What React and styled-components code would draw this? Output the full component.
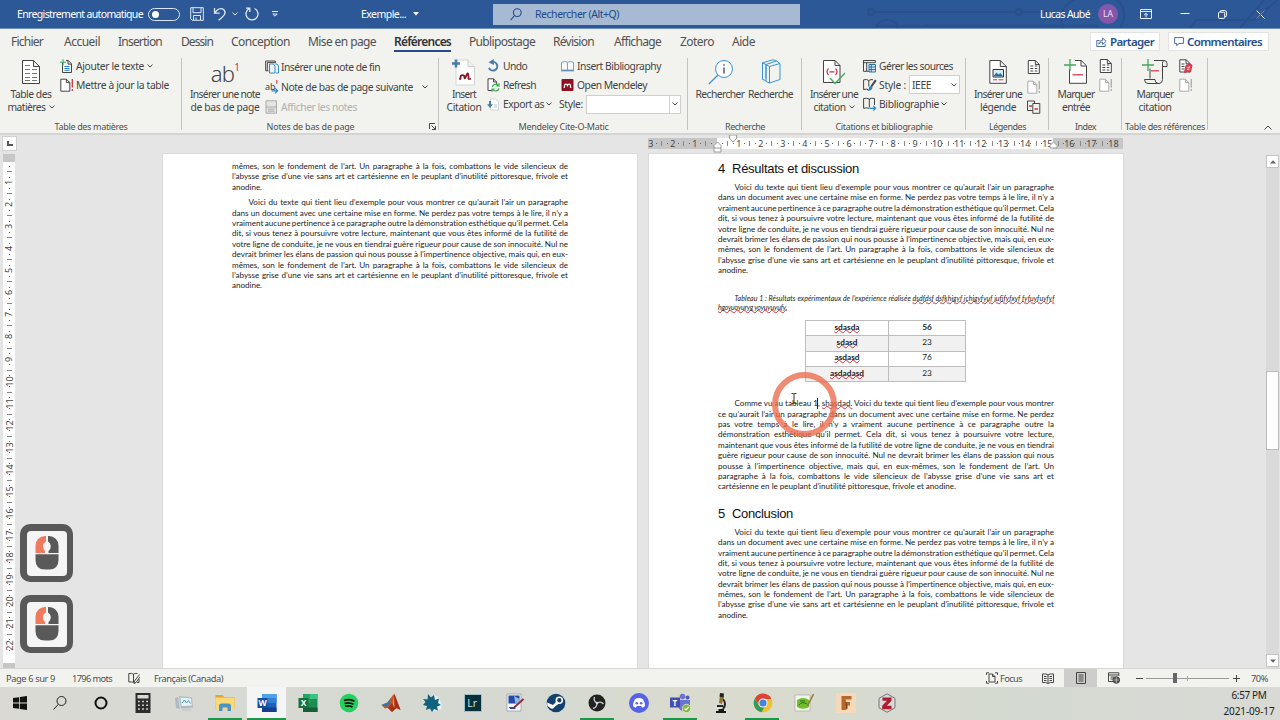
import { useLayoutEffect, useRef } from "react";
import styled, { createGlobalStyle } from "styled-components";

const GlobalStyle = createGlobalStyle`
    * {
        box-sizing: border-box;
    }

    body {
        margin: 0;
        overflow: hidden;
        font-family: "Noto Sans", "Open Sans", sans-serif;
        font-size: 10.5px;
        color: #444;
    }
`;

/* Text stretched or tightened to a given width, by letters or by words */
function Fit({ width, by = "letter", children }) {
    const ref = useRef(null);

    useLayoutEffect(() => {
        const el = ref.current;
        el.style.letterSpacing = "0px";
        el.style.wordSpacing = "0px";
        const text = el.textContent;
        const slack = width - el.getBoundingClientRect().width;
        if (by === "word") {
            el.style.wordSpacing = `${slack / (text.split(" ").length - 1)}px`;
        } else {
            el.style.letterSpacing = `${slack / text.length}px`;
        }
    }, [width, by, children]);

    return <FitText ref={ref}>{children}</FitText>;
}

const FitText = styled.span`
    display: inline-block;
    flex: none;
    white-space: pre;
`;

const Svg = styled.svg`
    display: block;
    flex: none;
    fill: none;
    stroke: ${({ $stroke }) => $stroke || "#444"};
    stroke-width: ${({ $sw }) => $sw || 1};
    margin-left: ${({ $ml }) => $ml || 0}px;
    overflow: visible;
`;

function Chevron({ ml = 4, color = "#444" }) {
    return (
        <Svg width="6" height="4" viewBox="0 0 6 4" $ml={ml} $stroke={color}>
            <path d="M.5 .6 3 3 5.5 .6" />
        </Svg>
    );
}

/* ---------- Title bar ---------- */

function TitleBar() {
    return (
        <TitleBarRow>
            <Circuit width="500" height="28" viewBox="780 0 500 28" $stroke="#284c86" $sw="2">
                <circle cx="871" cy="12" r="3" />
                <path d="M874 12h142M1022 12h26M926 26v-2M878 26h220" />
                <circle cx="1019" cy="12" r="3" />
                <path d="M876 28a11 8 0 0 1 22 0M1064 28c-8-14 2-26 14-30M1120 28c8-12 4-24-6-30M1190 28l6-8h58l26-22M1240 28l24-28" />
            </Circuit>
            <AutoSave><Fit width={126}>Enregistrement automatique</Fit></AutoSave>
            <Toggle><Knob /></Toggle>
            <Svg width="14" height="14" viewBox="0 0 14 14" $stroke="#dfe8f5" $ml={10}>
                <path d="M.7 .7h12.6v12.6H2.2L.7 11.8zM3 .7v5h8v-5M3.5 13v-4.5h7V13M6 13v-2.5" />
            </Svg>
            <Svg width="14" height="14" viewBox="0 0 14 14" $stroke="#dfe8f5" $sw="1.3" $ml={9}>
                <path d="M1.5 1v5.2h5.2M1.8 6C4 2 8 .5 10.6 2.6c3.2 2.8 1 6-5 10.6" />
            </Svg>
            <Chevron ml={5} color="#dfe8f5" />
            <Svg width="14" height="14" viewBox="0 0 14 14" $stroke="#dfe8f5" $sw="1.3" $ml={7}>
                <path d="M1 1.2h3.800V5M4.400 1.500a6 6 0 1 0 5.200 0" />
            </Svg>
            <Svg width="6" height="6" viewBox="0 0 6 6" $stroke="#dfe8f5" $ml={13}>
                <path d="M0 .5h6M.8 3 3 5.2 5.2 3z" />
            </Svg>
            <FileName><Fit width={45}>Exemple...</Fit></FileName>
            <Svg width="6" height="4" viewBox="0 0 6 4" $ml={7} $stroke="none">
                <path d="M0 0h6L3 3.5z" fill="#fff" />
            </Svg>
            <SearchBox>
                <Svg width="12" height="13" viewBox="0 0 12 13" $stroke="#24488a" $sw="1.1">
                    <circle cx="7.3" cy="4.6" r="3.9" />
                    <path d="M4.6 7.5.6 12.2" />
                </Svg>
                <Fit width={84}>Rechercher (Alt+Q)</Fit>
            </SearchBox>
            <UserName><Fit width={50}>Lucas Aubé</Fit></UserName>
            <Avatar>LA</Avatar>
            <Svg width="12" height="10" viewBox="0 0 12 10" $stroke="#e6edf8" $ml={22}>
                <path d="M.5 .5h11v9H.5zM.5 2.5h11M6 8.5v-4M4 6.2 6 4.3l2 1.9" />
            </Svg>
            <Svg width="10" height="10" viewBox="0 0 10 10" $stroke="#fff" $ml={28}>
                <path d="M.5 4.5h9" />
            </Svg>
            <Svg width="9" height="9" viewBox="0 0 9 9" $stroke="#fff" $ml={28}>
                <rect x=".5" y="2.2" width="6.2" height="6.2" rx="1" />
                <path d="M2.3 2V1.3Q2.3.6 3.2.6h3.6q1.7 0 1.7 1.7v3.4q0 .9-.9.9h-.7" />
            </Svg>
            <Svg width="9" height="9" viewBox="0 0 9 9" $stroke="#fff" $ml={29}>
                <path d="m.5.5 8 8M8.5.5l-8 8" />
            </Svg>
        </TitleBarRow>
    );
}

const TitleBarRow = styled.header`
    position: relative;
    display: flex;
    align-items: center;
    flex: none;
    height: 29px;
    padding-left: 17px;
    background: #2c5898;
    border-bottom: 1px solid #6f8fbd;
    color: #fff;
    font-size: 10.5px;
`;

const Circuit = styled(Svg)`
    position: absolute;
    right: 0;
    top: 0;
    overflow: hidden;
    opacity: .6;
`;

const AutoSave = styled.div`
    width: 126px;
`;

const Toggle = styled.div`
    display: flex;
    align-items: center;
    width: 32px;
    height: 13px;
    margin-left: 5px;
    padding-left: 3px;
    border: 1px solid #dce6f4;
    border-radius: 7px;
`;

const Knob = styled.div`
    width: 7px;
    height: 7px;
    border-radius: 50%;
    background: #fff;
`;

const FileName = styled.div`
    width: 45px;
    margin-left: 83px;
`;

const SearchBox = styled.div`
    display: flex;
    align-items: center;
    flex: none;
    gap: 13px;
    width: 307px;
    height: 21px;
    margin-left: 74px;
    padding-left: 17px;
    background: #a6bbd3;
    color: #24488a;
`;

const UserName = styled.div`
    position: relative;
    width: 50px;
    margin-left: 240px;
`;

const Avatar = styled.div`
    position: relative;
    flex: none;
    width: 20px;
    height: 20px;
    margin-left: 8px;
    border-radius: 50%;
    background: #8457ad;
    color: #eee0f7;
    font-size: 8.5px;
    line-height: 20px;
    text-align: center;
`;

/* ---------- Tabs ---------- */

const tabs = [
    { label: "Fichier", gap: 11, width: 32 },
    { label: "Accueil", gap: 21, width: 36 },
    { label: "Insertion", gap: 18, width: 44 },
    { label: "Dessin", gap: 19, width: 32 },
    { label: "Conception", gap: 18, width: 59 },
    { label: "Mise en page", gap: 18, width: 68 },
    { label: "Références", gap: 18, width: 57, active: true },
    { label: "Publipostage", gap: 18, width: 66 },
    { label: "Révision", gap: 18, width: 41 },
    { label: "Affichage", gap: 20, width: 47 },
    { label: "Zotero", gap: 19, width: 34 },
    { label: "Aide", gap: 18, width: 23 },
];

function TabBar() {
    return (
        <TabRow>
            {tabs.map(({ label, gap, width, active }) => (
                <Tab key={label} $gap={gap} $width={width} $active={active}>
                    <Fit width={width}>{label}</Fit>
                </Tab>
            ))}
            <Actions>
                <ActionButton $width={70}>
                    <Svg width="11" height="10" viewBox="0 0 11 10" $stroke="#365d99" $sw=".9">
                        <path d="M3.5 3.5H.8v6h8.4V7M2.8 7.2C3 4.8 4.4 3.5 6.6 3.4V1l3.6 3.4-3.6 3V5.2C5 5.2 3.8 5.8 2.8 7.2z" />
                    </Svg>
                    <Fit width={44}>Partager</Fit>
                </ActionButton>
                <ActionButton $width={101}>
                    <Svg width="10" height="9" viewBox="0 0 10 9" $stroke="#365d99" $sw=".9">
                        <path d="M.6.6h8.8v5.8H5L2.6 8.6V6.4h-2z" />
                    </Svg>
                    <Fit width={75}>Commentaires</Fit>
                </ActionButton>
            </Actions>
        </TabRow>
    );
}

const TabRow = styled.nav`
    display: flex;
    flex: none;
    height: 28px;
    font-size: 12px;
`;

const Tab = styled.div`
    flex: none;
    width: ${({ $width }) => $width}px;
    height: 23px;
    margin-left: ${({ $gap }) => $gap}px;
    line-height: 26px;
    white-space: nowrap;
    color: ${({ $active }) => ($active ? "#333" : "#505050")};
    font-weight: ${({ $active }) => ($active ? 600 : 400)};
    border-bottom: ${({ $active }) => ($active ? "2px solid #254a87" : "none")};
`;

const Actions = styled.div`
    display: flex;
    gap: 8px;
    margin: 3px 11px 0 auto;
`;

const ActionButton = styled.div`
    display: flex;
    align-items: center;
    gap: 3px;
    width: ${({ $width }) => $width}px;
    height: 19px;
    padding-left: 5px;
    border: 1px solid #e2e3e2;
    background: #fff;
    color: #24508f;
    font-size: 11.5px;
    font-weight: 600;
`;

/* ---------- Ribbon icons ---------- */

const PAGE = "M.5.5h7l4 4v9H.5z M7.5.5v4h4";

function BigIcon({ children, w = 24 }) {
    return (
        <Svg width={w} height="26" viewBox={`0 0 ${w} 26`}>{children}</Svg>
    );
}

function SmallIcon({ children, muted }) {
    return (
        <Svg width="13" height="14" viewBox="0 0 13 14" $stroke={muted ? "#aaa" : "#444"}>{children}</Svg>
    );
}

const TocIcon = () => (
    <BigIcon w={18}>
        <path d="M.5 1.5h11l6 6v17H.5zM11.5 1.5v6h6" fill="#fff" />
        <path d="M3 6.5h5M3 10.5h5M10 10.5h5M3 14.5h5M10 14.5h5M3 18.5h5M10 18.5h5M3 21.5h5M10 21.5h5" stroke="#777" />
    </BigIcon>
);

const AddTextIcon = () => (
    <SmallIcon>
        <path d="M2.5 4v9.500h9V4.800L8.300 1.500H6M8 1.500v3.600h3.500" />
        <path d="M4.500 7.500h5M4.500 9.500h5M4.500 11.300h5" stroke="#2c83c5" />
        <path d="M0 3.200h6M3 .2v6" stroke="#35a354" />
    </SmallIcon>
);

const UpdateIcon = ({ muted }) => (
    <SmallIcon muted={muted}>
        <path d="M.8 1.2h5.600l3.400 3.400v8.600H.8zM6.400 1.200v3.400h3.400" fill="#fff" />
        <path d="M12.300 1v8.500M12.300 11v2" stroke={muted ? "#aaa" : "#d62f43"} strokeWidth="1.300" />
    </SmallIcon>
);

const EndnoteIcon = () => (
    <SmallIcon>
        <path d="M3.5 10.8H.7V1h9.6v2.3M2.3 10.5V2.6H10" />
        <path d="M4.5 4h4l1.5 2v7H4.5zM10.5 4H12l1.5 2v7H11" stroke="#2e8dd0" fill="#f1f2ee" />
    </SmallIcon>
);

const NextNoteIcon = () => (
    <SmallIcon>
        <text x="0" y="10" fontSize="9" fill="#444" stroke="none">ab</text>
        <path d="M11.8 0v4" stroke="#d62f43" />
        <path d="M6.500 10.800h6M10 8.200l2.600 2.600L10 13.400" stroke="#2586ca" strokeWidth="1.200" />
    </SmallIcon>
);

const ShowNotesIcon = () => (
    <SmallIcon muted>
        <path d="M1 .8h10.500v12.400H1zM1 7h10.500M3 9.200h6.500M3 11.200h6.500" fill="#e4e4e2" />
    </SmallIcon>
);

const InsertCitationIcon = () => (
    <BigIcon w={24}>
        <path d="M4 1h12l6.500 6.500V26H4z" fill="#fff" stroke="#d4d4d2" />
        <path d="M16 1v6.500h6.500" fill="#eee" stroke="#ccc" />
        <path d="M0 4.500h8M4 .5v8" stroke="#4a7ba9" strokeWidth="2.600" />
        <path d="M8.500 20v-1.500q0-2.300 2-2.300t2 2.300 2-2.300 2 2.300V20M12.500 17.500v2" stroke="#8e1221" strokeWidth="1.800" />
        <path d="M7 20h2M16 20h3" stroke="#8e1221" strokeWidth="1.600" />
    </BigIcon>
);

const UndoIcon = () => (
    <SmallIcon>
        <path d="M4.500 3.200A4.300 4.300 0 1 1 2 8.800" stroke="#4a7ba9" strokeWidth="2" />
        <path d="M6.800 0v6L1.500 3.200z" fill="#4a7ba9" stroke="none" />
    </SmallIcon>
);

const RefreshIcon = () => (
    <SmallIcon>
        <path d="M5 12.500H1V.8h5.500l3.200 3.200v2M6.500.8V4h3" fill="#fff" />
        <path d="M5.300 9a3.500 3.500 0 0 1 6-1.500M12 10.300a3.500 3.500 0 0 1-6 1.500M12 5.200v2.800H9.300M5 13.800V11h2.700" stroke="#39a653" strokeWidth="1.200" />
    </SmallIcon>
);

const ExportIcon = () => (
    <SmallIcon>
        <path d="M3.500 2h5l3 3v8h-8z" fill="#fff" stroke="#d0d4d8" />
        <path d="M3 4v5" stroke="#4a7ba9" strokeWidth="2" />
        <path d="M0 7.300h6L3 11z" fill="#4a7ba9" stroke="none" />
        <path d="M7 8h3M7 10h3" stroke="#b7c8d8" />
    </SmallIcon>
);

const BookIcon = () => (
    <SmallIcon>
        <path d="M.5 3.500Q3.500 1.500 6.500 3.300 9.500 1.500 12.500 3.500v7.500H.5zM6.500 3.300V11" fill="#f8fafc" stroke="#7da0c6" />
        <path d="M0 11.800h13" stroke="#4a7ba9" />
    </SmallIcon>
);

const MendeleyIcon = () => (
    <SmallIcon>
        <rect x=".5" y="1" width="12" height="12" rx="1" fill="#8e1221" stroke="none" />
        <path d="M3.500 9.500V7.800q0-1.600 1.500-1.600t1.500 1.600q0-1.600 1.500-1.600t1.500 1.600v1.700M6.500 7v1.500M2.700 9.300h1M9.300 9.300h1" stroke="#fff" strokeWidth="1.200" />
    </SmallIcon>
);

const InfoIcon = () => (
    <BigIcon w={25}>
        <circle cx="16" cy="10" r="8.500" stroke="#3b94cf" fill="#fafcfd" />
        <path d="M9.800 16.200.8 25" stroke="#3b94cf" strokeWidth="1.300" />
        <path d="M16 8.500v6M16 5.200v1.500" stroke="#333" strokeWidth="1.200" />
    </BigIcon>
);

const BooksIcon = () => (
    <BigIcon w={20}>
        <path d="M8.500 7.500 19 4.500v16L8.500 24zM5 22.500V5.500L15.500 2l3.500 2.500M1.500 20.500V3.800L12 .8l3.500 1.200M1.500 20.500 5 21.500M5 22.500l3.500 1.500M1.500 3.800 5 5.500l3.500 2M5 5.500v14" stroke="#3b94cf" />
    </BigIcon>
);

const CitationIcon = () => (
    <BigIcon w={24}>
        <path d="M1.500 1.500H13l5 5v17H1.500zM13 1.500v5h5" fill="#fff" />
        <path d="M6.500 9.500q-3 3 0 6.500M13.500 9.500q3 3 0 6.500M7.500 12.800h5" stroke="#d62f43" strokeWidth="1.200" />
        <path d="m8 19 5 5.500L23 14" stroke="#42a75c" strokeWidth="1.300" />
    </BigIcon>
);

const SourcesIcon = () => (
    <SmallIcon>
        <path d="M.5 1.500h11.800v2.200H.5zM.5 1.500v10.800H6M3.700 4v8" />
        <path d="M6 5.500h6.500v7.500H6zM6 8h6.500M6 10.500h6.500M8.300 5.500V13" stroke="#2674aa" fill="#d5e8f4" />
    </SmallIcon>
);

const StyleIcon = () => (
    <SmallIcon>
        <path d="M5.500 11.800Q3.500 10.500.6 11.500V1.800Q4 1 5.800 2.500v6M5.800 2.500Q8 1 10 1.800" />
        <path d="M12.800 2.200 8 9" strokeWidth="2" />
        <path d="M8.500 8.300q-2.500-.5-2.700 2.200-.3 1.800-1.800 2 4.200 1 5.700-2.800z" fill="#2586ca" stroke="none" />
    </SmallIcon>
);

const BibliographyIcon = () => (
    <SmallIcon>
        <path d="M6 11.300Q4 10.500.6 11.300V1.500Q4 .8 6.300 2v8.500M6.300 2Q8.500.8 11.500 1.500V8" />
        <path d="M6.500 11.300h6M10.300 9l2.300 2.300-2.300 2.300" stroke="#2586ca" strokeWidth="1.200" />
    </SmallIcon>
);

const CaptionIcon = () => (
    <BigIcon w={18}>
        <path d="M.8 1.500h10.500l6 6v16.800H.8zM11.300 1.500v6h6" fill="#fff" />
        <path d="M4 10.500h10.500v7.500H4z" fill="#d9edf8" stroke="#333" />
        <path d="m4.500 17 3-3.500 2 2 2-1.500 2.700 3.500z" fill="#2270ae" stroke="none" />
        <path d="M4 20.800h4M9.500 20.800h5" stroke="#d62f43" />
    </BigIcon>
);

const ListIcon = () => (
    <SmallIcon>
        <g transform="translate(.8 0)">
            <path d={PAGE} fill="#fff" />
            <path d="M2.500 6h3M7 6h2.500M2.500 8.500h3M7 8.500h2.500M2.500 11h3M7 11h2.500" />
        </g>
    </SmallIcon>
);

const CrossRefIcon = () => (
    <SmallIcon>
        <path d="M5.500 10.500H.5V1h7v2M5.800 3.500h7v9.800h-7z" />
        <path d="M2 6h3M7.500 9h3.500" stroke="#d62f43" strokeWidth="1.300" />
    </SmallIcon>
);

const IndexIcon = () => (
    <BigIcon w={24}>
        <path d="M5.500 10v14.300h17V6.800l-5.300-5.300H11M17 1.500V7h5.500" fill="#fff" />
        <path d="M8.500 15.800h10.500" stroke="#d62f43" strokeWidth="1.200" />
        <path d="M0 6h12M6 0v12" stroke="#42a75c" strokeWidth="1.300" />
    </BigIcon>
);

const ScrollIcon = () => (
    <BigIcon w={26}>
        <path d="M8 9.500v10M12 1.500h10q3 0 3 3v3h-4.500M22 1.500q-1.500.5-1.500 3v16q0 4-3.500 4H6q-3.500 0-3.500-4h10.500q0 4 3.500 4" />
        <path d="M9 11.800h8" stroke="#d62f43" strokeWidth="1.200" />
        <path d="M0 6h12M6 0v12" stroke="#42a75c" strokeWidth="1.300" />
    </BigIcon>
);

const AuthorityIcon = () => (
    <SmallIcon>
        <path d="M.8.800h6.500l3.700 3.700v8.500H.8zM7 .8v4h4" fill="#fff" />
        <path d="M2.500 5h3M2.500 7.500h3M2.500 10h3" />
        <path d="M7 6.500q3-2 6-.5l-1.500 7q-3-1.500-6 .5z" fill="#df4658" stroke="#d62f43" />
        <path d="M8.500 8.500 11 8M8 10.500l2.500-.5" stroke="#fff" strokeWidth=".8" />
    </SmallIcon>
);

/* ---------- Ribbon ---------- */

function BigButton({ icon, lines, ml, width, chevron }) {
    return (
        <BigButtonBox $ml={ml} $width={width}>
            <BigIconBox>{icon}</BigIconBox>
            {lines.map(([text, w], i) => (
                <BigLine key={text}>
                    <Fit width={w}>{text}</Fit>
                    {chevron && i === lines.length - 1 && <Chevron ml={3} />}
                </BigLine>
            ))}
        </BigButtonBox>
    );
}

function Command({ icon, text, width, chevron, muted }) {
    return (
        <CommandRow $muted={muted}>
            {icon}
            {text && <Fit width={width}>{text}</Fit>}
            {chevron !== undefined && <Chevron ml={chevron} />}
        </CommandRow>
    );
}

function Group({ width, title, titleWidth, launcher, children }) {
    return (
        <GroupBox $width={width}>
            <GroupBody>{children}</GroupBody>
            <GroupTitle>
                <Fit width={titleWidth}>{title}</Fit>
                {launcher && (
                    <Launcher width="7" height="7" viewBox="0 0 7 7">
                        <path d="M.5 6V.5H6M2.500 2.500l4 4M6.500 3v3.500H3" />
                    </Launcher>
                )}
            </GroupTitle>
        </GroupBox>
    );
}

function Ribbon() {
    return (
        <RibbonRow>
            <Group width={182} title="Table des matières" titleWidth={73}>
                <BigButton ml={3} width={56} icon={<TocIcon />} lines={[["Table des", 41], ["matières", 38]]} chevron />
                <Column $ml={1}>
                    <Command icon={<AddTextIcon />} text="Ajouter le texte" width={68} chevron={0} />
                    <Command icon={<UpdateIcon />} text="Mettre à jour la table" width={93} />
                </Column>
            </Group>
            <Group width={257} title="Notes de bas de page" titleWidth={88} launcher>
                <BigButton
                    ml={6}
                    width={74}
                    icon={<Footnote>ab<sup>1</sup></Footnote>}
                    lines={[["Insérer une note", 70], ["de bas de page", 69]]}
                />
                <Column $ml={3} $tall>
                    <Command icon={<EndnoteIcon />} text="Insérer une note de fin" width={99} />
                    <Command icon={<NextNoteIcon />} text="Note de bas de page suivante" width={132} chevron={6} />
                    <Command icon={<ShowNotesIcon />} text="Afficher les notes" width={76} muted />
                </Column>
            </Group>
            <Group width={249} title="Mendeley Cite-O-Matic" titleWidth={90}>
                <BigButton ml={5} width={40} icon={<InsertCitationIcon />} lines={[["Insert", 24], ["Citation", 35]]} />
                <Column $ml={3} $width={68}>
                    <Command icon={<UndoIcon />} text="Undo" width={24} />
                    <Command icon={<RefreshIcon />} text="Refresh" width={33} />
                    <Command icon={<ExportIcon />} text="Export as" width={41} chevron={-1} />
                </Column>
                <Column $ml={4}>
                    <Indented><Command icon={<BookIcon />} text="Insert Bibliography" width={84} /></Indented>
                    <Indented><Command icon={<MendeleyIcon />} text="Open Mendeley" width={70} /></Indented>
                    <CommandRow>
                        <Fit width={24}>Style:</Fit>
                        <Combo $width={95} $split><Chevron ml={0} /></Combo>
                    </CommandRow>
                </Column>
            </Group>
            <Group width={114} title="Recherche" titleWidth={40}>
                <BigButton ml={8} width={48} icon={<InfoIcon />} lines={[["Rechercher", 49]]} />
                <BigButton ml={4} width={45} icon={<BooksIcon />} lines={[["Recherche", 45]]} />
            </Group>
            <Group width={164} title="Citations et bibliographie" titleWidth={97}>
                <BigButton ml={6} width={52} icon={<CitationIcon />} lines={[["Insérer une", 48], ["citation", 32]]} chevron />
                <Column $ml={3}>
                    <Command icon={<SourcesIcon />} text="Gérer les sources" width={74} />
                    <CommandRow>
                        <StyleIcon />
                        <Fit width={27}>Style :</Fit>
                        <Combo $width={51}><Fit width={19}>IEEE</Fit><Chevron ml={0} /></Combo>
                    </CommandRow>
                    <Command icon={<BibliographyIcon />} text="Bibliographie" width={60} chevron={-1} />
                </Column>
            </Group>
            <Group width={83} title="Légendes" titleWidth={37}>
                <BigButton ml={6} width={52} icon={<CaptionIcon />} lines={[["Insérer une", 48], ["légende", 36]]} />
                <Column $ml={3} $tall>
                    <Command icon={<ListIcon />} />
                    <Command icon={<UpdateIcon muted />} />
                    <Command icon={<CrossRefIcon />} />
                </Column>
            </Group>
            <Group width={73} title="Index" titleWidth={21}>
                <BigButton ml={7} width={40} icon={<IndexIcon />} lines={[["Marquer", 37], ["entrée", 28]]} />
                <Column $ml={3}>
                    <Command icon={<ListIcon />} />
                    <Command icon={<UpdateIcon muted />} />
                </Column>
            </Group>
            <Group width={86} title="Table des références" titleWidth={80}>
                <BigButton ml={13} width={40} icon={<ScrollIcon />} lines={[["Marquer", 37], ["citation", 33]]} />
                <Column $ml={4}>
                    <Command icon={<AuthorityIcon />} />
                    <Command icon={<UpdateIcon muted />} />
                </Column>
            </Group>
            <Collapse width="8" height="5" viewBox="0 0 8 5">
                <path d="m.5 4.500 3.500-3.500 3.500 3.500" />
            </Collapse>
        </RibbonRow>
    );
}

const RibbonRow = styled.section`
    display: flex;
    flex: none;
    height: 78px;
    border-bottom: 2px solid #d4d4d2;
`;

const GroupBox = styled.div`
    display: flex;
    flex-direction: column;
    flex: none;
    width: ${({ $width }) => $width}px;
    height: 76px;
    background: linear-gradient(#c3c4c2, #c3c4c2) right 1px / 1px 72px no-repeat;
`;

const GroupBody = styled.div`
    display: flex;
    height: 62px;
`;

const GroupTitle = styled.div`
    position: relative;
    display: flex;
    justify-content: center;
    height: 14px;
    line-height: 15px;
    font-size: 9px;
    color: #505050;
`;

const Launcher = styled(Svg)`
    position: absolute;
    right: 3px;
    top: 4px;
`;

const Collapse = styled(Svg)`
    align-self: flex-end;
    margin: 0 8px 3px auto;
`;

const BigButtonBox = styled.div`
    flex: none;
    width: ${({ $width }) => $width}px;
    margin-left: ${({ $ml }) => $ml}px;
`;

const BigIconBox = styled.div`
    display: flex;
    align-items: center;
    justify-content: center;
    height: 30px;
`;

const BigLine = styled.div`
    display: flex;
    align-items: center;
    justify-content: center;
    height: 13px;
    line-height: 14px;
    font-size: 10.3px;
`;

const Column = styled.div`
    --row: ${({ $tall }) => ($tall ? 20 : 19.3)}px;
    flex: none;
    width: ${({ $width }) => ($width ? `${$width}px` : "auto")};
    margin-top: ${({ $tall }) => ($tall ? 0 : -1)}px;
    margin-left: ${({ $ml }) => $ml}px;
`;

const CommandRow = styled.div`
    display: flex;
    align-items: center;
    gap: 3px;
    height: var(--row);
    font-size: 10.3px;
    color: ${({ $muted }) => ($muted ? "#b0b0ae" : "#444")};
`;

const Indented = styled.div`
    padding-left: 2px;
`;

const Combo = styled.div`
    display: flex;
    align-items: center;
    justify-content: ${({ $split }) => ($split ? "flex-end" : "space-between")};
    width: ${({ $width }) => $width}px;
    height: 19px;
    padding: 0 2px;
    border: 1px solid #cfd0ce;
    background: ${({ $split }) => ($split ? "linear-gradient(#cfd0ce, #cfd0ce) right 10px top / 1px 100% no-repeat, #fff" : "#fff")};
`;

const Footnote = styled.div`
    height: 30px;
    line-height: 32px;
    font-size: 22px;
    font-weight: 300;
    letter-spacing: -.8px;

    sup {
        display: inline-block;
        line-height: 10px;
        font-size: 10px;
        vertical-align: 11px;
        color: #d62f43;
        font-weight: 400;
    }
`;

/* ---------- Rulers ---------- */

function HorizontalRuler() {
    return (
        <HRuler>
            {[3, 2, 1].map((n) => (
                <HCell key={`m${n}`}><b>{n}</b><Dot /><Tick /><Dot /></HCell>
            ))}
            <Origin />
            {Array.from({ length: 18 }, (_, i) => (
                <HCell key={i}><Dot /><Tick /><Dot /><b>{i + 1}</b></HCell>
            ))}
            <Dot />
            <Indents width="344" height="20" viewBox="0 0 344 20" $stroke="#999">
                <path d="M16.500 1h7v3.500L20 8l-3.500-3.500zM1 11.500 4.500 8 8 11.500V18H1zM1 14h7M337 11.500l3.500-3.500 3.500 3.500V14h-7z" fill="#fff" />
            </Indents>
        </HRuler>
    );
}

function VerticalRuler() {
    return (
        <VRulerColumn>
            <TabStop>
                <Svg width="6" height="5" viewBox="0 0 6 5" $stroke="#555" $sw="2">
                    <path d="M1 0v4h5" />
                </Svg>
            </TabStop>
            <VRuler>
                {Array.from({ length: 22 }, (_, i) => (
                    <VCell key={i}><Dot /><VTick /><Dot /><span><b>{i + 1}</b></span></VCell>
                ))}
                <VCell><Dot /></VCell>
            </VRuler>
        </VRulerColumn>
    );
}

const HRuler = styled.div`
    position: relative;
    display: flex;
    align-items: center;
    width: 475px;
    height: 11px;
    margin: 3px 0 5px 630px;
    background: linear-gradient(90deg, #c6c6c6 69px, #fff 69px, #fff 405px, #c6c6c6 405px);
    font-size: 9px;
    color: #444;

    b {
        display: flex;
        justify-content: center;
        width: 5.51px;
        font-weight: 400;
    }
`;

const HCell = styled.div`
    display: flex;
    align-items: center;
    flex: none;
    width: 22.04px;

    > i {
        margin: 0 2.26px;
    }
`;

const Dot = styled.i`
    flex: none;
    width: 1px;
    height: 1px;
    background: #666;
`;

const Tick = styled.i`
    flex: none;
    width: 1px;
    height: 5px;
    background: #888;
`;

const Origin = styled.div`
    flex: none;
    width: 5.5px;
`;

const Indents = styled(Svg)`
    position: absolute;
    left: 65px;
    top: -4px;
`;

const VRulerColumn = styled.div`
    flex: none;
    width: 18px;
    overflow: hidden;
`;

const TabStop = styled.div`
    display: flex;
    align-items: center;
    justify-content: center;
    width: 15px;
    height: 15px;
    margin: 1px 0 3px 2px;
    border: 1px solid #d0d0d0;
    background: #fff;
`;

const VRuler = styled.div`
    width: 12px;
    height: 514px;
    margin-left: 3px;
    padding-top: 9.5px;
    background: linear-gradient(#c6c6c6 8px, #fff 8px, #fff 509px, #c6c6c6 509px);
    font-size: 9px;
    color: #444;
    overflow: hidden;
`;

const VCell = styled.div`
    display: flex;
    flex-direction: column;
    align-items: center;
    height: 22.04px;

    > i {
        margin: 2.26px 0;
    }

    > span {
        display: flex;
        align-items: center;
        justify-content: center;
        height: 5.51px;
        width: 12px;
    }

    b {
        font-weight: 400;
        transform: rotate(-90deg);
    }
`;

const VTick = styled.i`
    flex: none;
    width: 5px;
    height: 1px;
    background: #888;
`;

/* ---------- Document ---------- */

const filler = [
    "Voici du texte qui tient lieu d’exemple pour vous montrer ce qu’aurait l’air un paragraphe",
    "dans un document avec une certaine mise en forme. Ne perdez pas votre temps à le lire, il n’y a",
    "vraiment aucune pertinence à ce paragraphe outre la démonstration esthétique qu’il permet. Cela",
    "dit, si vous tenez à poursuivre votre lecture, maintenant que vous êtes informé de la futilité de",
    "votre ligne de conduite, je ne vous en tiendrai guère rigueur pour cause de son innocuité. Nul ne",
    "devrait brimer les élans de passion qui nous pousse à l’impertinence objective, mais qui, en eux-",
    "mêmes, son le fondement de l’art. Un paragraphe à la fois, combattons le vide silencieux de",
    "l’abysse grise d’une vie sans art et cartésienne en le peuplant d’inutilité pittoresque, frivole et",
    "anodine.",
];

const discussion = [
    <>Comme vu au tableau 1, <Misspelt>shasdad.</Misspelt> Voici du texte qui tient lieu d’exemple pour vous montrer</>,
    "ce qu’aurait l’air un paragraphe dans un document avec une certaine mise en forme. Ne perdez",
    "pas votre temps à le lire, il n’y a vraiment aucune pertinence à ce paragraphe outre la",
    "démonstration esthétique qu’il permet. Cela dit, si vous tenez à poursuivre votre lecture,",
    "maintenant que vous êtes informé de la futilité de votre ligne de conduite, je ne vous en tiendrai",
    "guère rigueur pour cause de son innocuité. Nul ne devrait brimer les élans de passion qui nous",
    "pousse à l’impertinence objective, mais qui, en eux-mêmes, son le fondement de l’art. Un",
    "paragraphe à la fois, combattons le vide silencieux de l’abysse grise d’une vie sans art et",
    "cartésienne en le peuplant d’inutilité pittoresque, frivole et anodine.",
];

const results = [
    ["sdasda", 56],
    ["sdasd", 23],
    ["asdasd", 76],
    ["asdadasd", 23],
];

function Misspelt({ children }) {
    return <Wavy>{children}</Wavy>;
}

function Paragraph({ lines, lastWidth = 30, mt = 0, indent = true }) {
    const last = lines.length - 1;
    return (
        <ParagraphBox $mt={mt}>
            {lines.map((line, i) => {
                const indented = indent && i === 0;
                return (
                    <Line key={i} $indented={indented}>
                        <Fit width={i === last ? lastWidth : indented ? 319.5 : 336} by={i === last ? "letter" : "word"}>
                            {line}
                        </Fit>
                    </Line>
                );
            })}
        </ParagraphBox>
    );
}

function Pages() {
    return (
        <PageRow>
            <Page>
                <Paragraph lines={filler.slice(6)} indent={false} mt={7} />
                <Paragraph lines={filler} mt={5} />
            </Page>
            <Page>
                <Heading $mt={6}><span>4</span><Fit width={127}>Résultats et discussion</Fit></Heading>
                <Paragraph lines={filler} mt={5} />
                <Caption>
                    <CaptionLine $indented>
                        <Fit width={178}>Tableau 1 : Résultats expérimentaux de l’expérience réalisée </Fit>
                        <Fit width={142}><Wavy>dsdfdsf dsfkhigyf jchigyfyuf iufjfyfxyf fyfuyfuyfyf</Wavy></Fit>
                    </CaptionLine>
                    <CaptionLine><Fit width={69}><Wavy>hgoyuoyuryg yoyuyuyufy.</Wavy></Fit></CaptionLine>
                </Caption>
                <Results>
                    <tbody>
                        {results.map(([name, value], i) => (
                            <ResultRow key={name} $shaded={i % 2 === 1} $first={i === 0}>
                                <th><Wavy>{name}</Wavy></th>
                                <td>{value}</td>
                            </ResultRow>
                        ))}
                    </tbody>
                </Results>
                <Paragraph lines={discussion} lastWidth={238} mt={16} />
                <Heading $mt={13}><span>5</span><Fit width={61}>Conclusion</Fit></Heading>
                <Paragraph lines={filler} mt={5} />
            </Page>
        </PageRow>
    );
}

const PageRow = styled.div`
    display: flex;
    gap: 12px;
    height: 515px;
    margin-left: 145px;
`;

const Page = styled.article`
    width: 474px;
    padding: 0 69px;
    background: #fff;
    box-shadow: 0 0 0 1px #dadada;
    color: #1c1c1c;
    font-family: Lato, Carlito, sans-serif;
    font-size: 8.1px;
    font-variant-ligatures: none;
`;

const ParagraphBox = styled.div`
    padding-top: ${({ $mt }) => $mt}px;
`;

const Line = styled.div`
    height: 10.4px;
    line-height: 10.4px;
    padding-left: ${({ $indented }) => ($indented ? 16.5 : 0)}px;
    white-space: nowrap;
`;

const Heading = styled.h1`
    display: flex;
    gap: 7px;
    height: 17px;
    margin: ${({ $mt }) => $mt}px 0 0;
    line-height: 17px;
    font-family: "Liberation Sans", Arial, sans-serif;
    font-size: 13px;
    font-weight: 400;
    color: #111;

    > span:first-child {
        width: 7px;
    }
`;

const Wavy = styled.span`
    text-decoration: underline wavy #cf2f3c .8px;
    text-decoration-skip-ink: none;
    text-underline-offset: -.5px;
`;

const Caption = styled.div`
    margin-top: 18.5px;
    height: 26px;
    font-size: 7px;
    font-style: italic;
`;

const CaptionLine = styled.div`
    height: 9.3px;
    line-height: 9.3px;
    padding-left: ${({ $indented }) => ($indented ? 16.5 : 0)}px;
    white-space: nowrap;
`;

const Results = styled.table`
    width: 161px;
    margin-left: 87px;
    border-collapse: collapse;
    text-align: center;

    th,
    td {
        height: 15.3px;
        padding: 0 0 2px;
        border: 1px solid #bdbdbd;
        font-size: 8.3px;
        line-height: 11px;
    }

    th {
        width: 83px;
        font-weight: 700;
    }
`;

const ResultRow = styled.tr`
    background: ${({ $shaded }) => ($shaded ? "#f1f1f1" : "#fff")};

    td {
        font-weight: ${({ $first }) => ($first ? 700 : 400)};
    }
`;

/* ---------- Pointer and click overlays ---------- */

function MouseKey({ top }) {
    return (
        <KeyBox $top={top}>
            <Svg width="24" height="34" viewBox="0 0 24 34" $stroke="none">
                <path d="M11 0h-1A9.500 9.500 0 0 0 .5 9.500V17H10v-2Q8 13.500 8 10.300T11 5.500z" fill="#f07a5e" />
                <path d="M13 0h1A9.500 9.500 0 0 1 23.500 9.500V17H13.500v-2Q15.800 13.500 15.800 10.300T13 5.500z" fill="#595959" />
                <path d="M.5 18.300h23V24Q23.500 33.500 14 33.500h-4Q.5 33.500.5 24z" fill="#595959" />
            </Svg>
        </KeyBox>
    );
}

const KeyBox = styled.div`
    position: absolute;
    left: 20px;
    top: ${({ $top }) => $top}px;
    display: flex;
    align-items: center;
    justify-content: center;
    width: 53px;
    height: 58px;
    border: 7px solid #595959;
    border-radius: 10px;
    background: #595959;

    &::before {
        content: "";
        position: absolute;
        inset: -.5px;
        border-radius: 4px;
        background: #f5f5f5;
    }

    svg {
        position: relative;
    }
`;

const ClickRing = styled.div`
    position: absolute;
    left: 771.5px;
    top: 372px;
    width: 65px;
    height: 65px;
    border: 6px solid #ec6a4c;
    border-radius: 50%;
    opacity: .78;
`;

const IBeam = styled(Svg)`
    position: absolute;
    left: 791px;
    top: 393px;
`;

const Caret = styled.div`
    position: absolute;
    left: 817px;
    top: 398px;
    width: 1px;
    height: 11px;
    background: #222;
`;

/* ---------- Scroll bar ---------- */

function ScrollBar() {
    return (
        <ScrollTrack>
            <ScrollButton>
                <Svg width="6" height="4" viewBox="0 0 6 4" $stroke="none"><path d="M0 3.500h6L3 .3z" fill="#666" /></Svg>
            </ScrollButton>
            <Thumb />
            <ScrollButton>
                <Svg width="6" height="4" viewBox="0 0 6 4" $stroke="none"><path d="M0 .5h6L3 3.700z" fill="#666" /></Svg>
            </ScrollButton>
        </ScrollTrack>
    );
}

const ScrollTrack = styled.div`
    display: flex;
    flex-direction: column;
    width: 13px;
    height: 513px;
    margin: 20px 1px 0 auto;
    background: #dadada;
`;

const ScrollButton = styled.div`
    display: flex;
    align-items: center;
    justify-content: center;
    flex: none;
    height: 13px;
    border: 1px solid #c4c4c4;
    background: #fff;
`;

const Thumb = styled.div`
    flex: none;
    height: 79px;
    margin: 203px 0 204px;
    border: 1px solid #bbb;
    background: #fff;
`;

/* ---------- Status bar ---------- */

function StatusBar() {
    return (
        <StatusRow>
            <Fit width={49}>Page 6 sur 9</Fit>
            <StatusItem $ml={17}><Fit width={40}>1796 mots</Fit></StatusItem>
            <Svg width="12" height="12" viewBox="0 0 12 12" $ml={16}>
                <path d="M5.500 10.500Q4 9.500.8 10V1.500q3-.5 4.700.7V10.500M5.500 2.200Q7 1 9.500 1.500M11.500 2.500 6.500 9l-.5 2.500 2-1L11.800 5M9 10.500h2V7" />
            </Svg>
            <StatusItem $ml={14}><Fit width={69}>Français (Canada)</Fit></StatusItem>
            <StatusItem $ml={763}>
                <Svg width="12" height="12" viewBox="0 0 12 12">
                    <path d="M3 .8H.5v2M9 .8h2.500v2M.5 9v2.200H3M11.500 9v2.200H9M3 2h3.500l2.500 2.500V10H3zM6.500 2v2.500H9" />
                </Svg>
            </StatusItem>
            <StatusItem $ml={2}><Fit width={22}>Focus</Fit></StatusItem>
            <Svg width="12" height="11" viewBox="0 0 12 11" $ml={20}>
                <path d="M6 1.800Q4 .5.500 1v8.500q3.500-.5 5.500 1 2-1.500 5.500-1V1Q8 .5 6 1.800zM6 1.800v8.500M2 3.500h2.500M2 5.500h2.500M2 7.500h2.500M7.500 3.500H10M7.500 5.500H10M7.500 7.500H10" />
            </Svg>
            <ActiveView>
                <Svg width="10" height="12" viewBox="0 0 10 12">
                    <path d="M.5.5h9v11h-9zM2.500 3h5M2.500 5h5M2.500 7h5M2.500 9h5" />
                </Svg>
            </ActiveView>
            <Svg width="12" height="12" viewBox="0 0 12 12" $ml={11}>
                <path d="M5 9.500H.5V.8h10.300V4M.5 3h10M2.500 5h4M2.500 7h3" />
                <circle cx="8.300" cy="8" r="3.300" fill="#555" />
                <path d="M5.500 8h5.500M8.300 5v6" stroke="#ddd" strokeWidth=".6" />
            </Svg>
            <Svg width="7" height="7" viewBox="0 0 7 7" $ml={16}><path d="M0 3.500h7" /></Svg>
            <Slider><SliderThumb /><SliderTick /></Slider>
            <Svg width="7" height="7" viewBox="0 0 7 7" $ml={4}><path d="M0 3.500h7M3.500 0v7" /></Svg>
            <StatusItem $ml={11}><Fit width={17}>70%</Fit></StatusItem>
        </StatusRow>
    );
}

const StatusRow = styled.footer`
    display: flex;
    align-items: center;
    flex: none;
    height: 18px;
    padding-left: 6px;
    background: #f2f3ef;
    font-size: 9.3px;
    color: #505050;
`;

const StatusItem = styled.div`
    flex: none;
    margin-left: ${({ $ml }) => $ml}px;
`;

const ActiveView = styled.div`
    display: flex;
    align-items: center;
    justify-content: center;
    width: 33px;
    height: 18px;
    margin-left: 10px;
    background: #cdcecb;
`;

const Slider = styled.div`
    display: flex;
    align-items: center;
    width: 83px;
    height: 12px;
    margin-left: 3px;
    background: linear-gradient(#999, #999) 0 50% / 100% 1px no-repeat;
`;

const SliderThumb = styled.div`
    width: 4px;
    height: 10px;
    margin-left: 27px;
    background: #666;
`;

const SliderTick = styled.div`
    width: 1px;
    height: 5px;
    margin-left: 10px;
    background: #aaa;
`;

/* ---------- Task bar ---------- */

const apps = [
    {
        name: "calculator",
        icon: (
            <>
                <path d="M2.500 0h15v20h-15z" fill="#2d2d2b" />
                <path d="M4.500 2h11v3.500h-11z" fill="#d8dad2" />
                <path d="M5 8.500h10M5 12.200h10M5 16h10" stroke="#d8dad2" strokeWidth="1.600" strokeDasharray="1.800 2.300" />
            </>
        ),
    },
    {
        name: "monitor",
        icon: (
            <>
                <path d="m1 5 3-1 2 12-4-1zM5 3l13 1.500 1 10-12 1z" fill="#aeb9c0" />
                <path d="m6.500 4.500 10.500 1 .7 7-10 .5z" fill="#e8f4fa" />
                <path d="m8 10 2.500-3 2 3 2-2.500 2 3" stroke="#4c9bc4" />
                <path d="M9 15h7l1 3H8z" fill="#c9cccb" />
            </>
        ),
    },
    {
        name: "explorer",
        open: true,
        icon: (
            <>
                <path d="M.5 2h7l2 2h10v12H.5z" fill="#e0a52f" />
                <path d="M.5 4.500h19V17H.5z" fill="#fbd978" />
                <path d="M4 18v-5q0-2.500 2.500-2.500h7Q16 10.500 16 13v5h-3.500v-3.500h-5V18z" fill="#4b93c4" />
            </>
        ),
    },
    {
        name: "word",
        open: true,
        active: true,
        icon: (
            <>
                <path d="M5 1h14.500v18H5z" fill="#1f5fbd" />
                <path d="M5 1h14.500v4.500H5z" fill="#4da3e8" />
                <path d="M5 5.500h14.500V10H5z" fill="#2f82d8" />
                <path d="M5 14.500h14.500V19H5z" fill="#143f8e" />
                <path d="M.5 5h10v10H.5z" fill="#164da0" />
                <text x="1.500" y="13" fontSize="8.500" fontWeight="700" fill="#fff">W</text>
            </>
        ),
    },
    {
        name: "excel",
        icon: (
            <>
                <path d="M5 1h14.500v18H5z" fill="#1f8c53" />
                <path d="M5 1h7v9H5z" fill="#22a565" />
                <path d="M12 1h7.500v5H12z" fill="#3ac481" />
                <path d="M5 14.500h14.500V19H5z" fill="#155f38" />
                <path d="M.5 5h10v10H.5z" fill="#127240" />
                <text x="2.700" y="13" fontSize="8.500" fontWeight="700" fill="#fff">X</text>
            </>
        ),
    },
    {
        name: "spotify",
        icon: (
            <>
                <circle cx="10" cy="10" r="9.300" fill="#24d05e" />
                <path d="M5 7.500q6-2 10.500.8M5.500 10.500q5-1.500 9 .8M6 13.300q4-1.200 7.500.6" stroke="#111" strokeWidth="1.700" />
            </>
        ),
    },
    {
        name: "matlab",
        icon: (
            <>
                <path d="m.5 12 6-2.500L12 2l1.500-1L19.500 17l-3.500-2-5 4-4-4-3 .5z" fill="#cf5420" />
                <path d="m.5 12 6-2.500L10 5l-1 6-3 3z" fill="#3976a8" />
                <path d="M13.500 1 12 9l-5 6 4 4 4-4 4.500 2z" fill="#a5311a" />
                <path d="m13 3-1.500 8 2 4z" fill="#ee9d3e" />
            </>
        ),
    },
    {
        name: "leaf",
        icon: (
            <>
                <path d="M12 2q8 3 7.500 13.500L14 18l-6-3z" fill="#e8f5fb" />
                <path d="m6 1 3 3.500L12 2l1 5 4-1.500-1 4.500 3 2-4 1.500 1 4-4-1.500-2 3-2-3.500L4 17l1-4-4-1 2.500-3L1 6l4.500.5z" fill="#11627d" />
            </>
        ),
    },
    {
        name: "lightroom",
        icon: (
            <>
                <path d="M1.500 1.500h17v17h-17z" fill="#06303a" stroke="#9fc0c8" />
                <text x="4.200" y="13.800" fontSize="10.500" fill="#c3e3ec">Lr</text>
            </>
        ),
    },
    {
        name: "inkpad",
        icon: (
            <>
                <path d="M2 1h14v17H2z" fill="#f4f6f8" stroke="#8f98a0" strokeWidth=".7" />
                <path d="M3.500 2.500h11v8h-11z" fill="#2748a5" />
                <path d="m9 3 5.500 3v4.500h-4z" fill="#8bbce8" />
                <path d="M4 14h5l2 2H5z" fill="#2748a5" />
                <path d="M18.500 6 8 15.500" stroke="#8a2c3a" strokeWidth="1.800" />
            </>
        ),
    },
    {
        name: "steam",
        icon: (
            <>
                <circle cx="10" cy="10" r="9.300" fill="#12406f" />
                <circle cx="13.300" cy="7.300" r="3" stroke="#fff" strokeWidth="1.600" />
                <path d="m1 9.500 6 2.500 4-4 2 2.500-4.500 3.500Q7.500 16.500 5 15.500L1.500 13z" fill="#fff" />
            </>
        ),
    },
    {
        name: "obs",
        open: true,
        icon: (
            <>
                <circle cx="10" cy="10" r="8.500" fill="#222" />
                <path d="M10 10q-4-2-2.500-6M10 10q4-2 6.500 1M10 10q0 4.500-4 5.500" stroke="#ccc" strokeWidth="1.300" />
                <circle cx="10" cy="10" r="1.300" fill="#ddd" />
            </>
        ),
    },
    {
        name: "discord",
        icon: (
            <>
                <circle cx="10" cy="10" r="10" fill="#5663e8" />
                <path d="M6 6q4-1.800 8 0 2.200 4 2 7-1.500 1.500-3 1.500l-.8-1.500H7.800L7 14.500q-1.500 0-3-1.500-.2-3 2-7z" fill="#fff" />
                <circle cx="7.800" cy="10.300" r="1.300" fill="#5663e8" />
                <circle cx="12.200" cy="10.300" r="1.300" fill="#5663e8" />
            </>
        ),
    },
    {
        name: "teams",
        open: true,
        icon: (
            <>
                <circle cx="12.500" cy="3.500" r="2.800" fill="#6a73d0" />
                <circle cx="17.500" cy="4.500" r="2" fill="#5159b5" />
                <path d="M8 7h12v6q-1 5-6 5t-6-5z" fill="#6a73d0" />
                <path d="M0 4.500h10v10H0z" fill="#454db0" />
                <text x="2.600" y="12.500" fontSize="8" fontWeight="700" fill="#fff">T</text>
                <circle cx="16.500" cy="15.500" r="4.200" fill="#83b636" stroke="#e4eecf" strokeWidth=".8" />
                <path d="m14.500 15.500 1.500 1.500 2.700-3" stroke="#fff" strokeWidth="1.200" />
            </>
        ),
    },
    {
        name: "microscope",
        icon: (
            <>
                <path d="M5 18h10v2H5zM7.500 16H13v2H7.500z" fill="#171713" />
                <path d="M12 6q4 5 0 10" stroke="#222" strokeWidth="2" />
                <path d="m9 2 4 1-2 8-3-1z" fill="#8f7430" />
                <path d="m9 0 4 .5-.5 4-4-1zM6 12h6v2H6z" fill="#222" />
            </>
        ),
    },
    {
        name: "chrome",
        open: true,
        icon: (
            <>
                <circle cx="10" cy="10" r="9.300" fill="#f2c12e" />
                <path d="M1.900 5.400A9.300 9.300 0 0 1 18.500 6H10L6 12z" fill="#dc4436" />
                <path d="M1.900 5.400 6 12.500l5.500 1.500-3 5.200A9.300 9.300 0 0 1 1.900 5.400z" fill="#2f9e57" />
                <circle cx="10" cy="10" r="4.600" fill="#f5f5f5" />
                <circle cx="10" cy="10" r="3.600" fill="#4285e0" />
            </>
        ),
    },
    {
        name: "notes",
        icon: (
            <>
                <path d="M1 2h15v16H1z" fill="#f3f8ec" stroke="#a4aaa0" strokeWidth=".7" />
                <path d="M3 7q6-4 12 0v7q-6 3.500-12 0z" fill="#6fbf2c" />
                <path d="M5 12q3-4 8-1M6 8h5" stroke="#276f22" />
                <path d="m19.500 1-6 12" stroke="#a07334" strokeWidth="1.600" />
            </>
        ),
    },
    {
        name: "fusion",
        icon: (
            <>
                <path d="M0 0h20v20H0z" fill="#f6d8bb" />
                <path d="M5.500 3h10v3.500h-6V9H14v3.500H9.500V17h-4z" fill="#b8672a" />
                <path d="M9.500 6.500V17l2-1.500v-3z" fill="#7e4418" />
            </>
        ),
    },
    {
        name: "zotero",
        icon: (
            <>
                <path d="m10 .8 8 4.500v9.500l-8 4.500-8-4.500V5.300z" fill="#d9d7d7" stroke="#777" />
                <path d="M5.500 4.500h9v3.300l-4.700 5h4.700v3.400h-9.300v-3.400l4.800-5H5.500z" fill="#b01c2e" />
            </>
        ),
    },
];

function TaskBar() {
    return (
        <TaskRow>
            <SystemButton>
                <Svg width="14" height="14" viewBox="0 0 14 14" $stroke="none">
                    <path d="m0 2 6-.8v5.400H0zM6.800 1 14 0v6.600H6.800zM0 7.400h6v5.400L0 12zM6.800 7.400H14V14l-7.200-1z" fill="#111" />
                </Svg>
            </SystemButton>
            <SystemButton>
                <Svg width="14" height="14" viewBox="0 0 14 14" $stroke="#222">
                    <circle cx="8.500" cy="5" r="4.500" />
                    <path d="M5.300 8.300.5 13.500" />
                </Svg>
            </SystemButton>
            <SystemButton>
                <Svg width="14" height="14" viewBox="0 0 14 14" $stroke="#111" $sw="2">
                    <circle cx="7" cy="7" r="5.500" />
                </Svg>
            </SystemButton>
            {apps.map(({ name, icon, open, active }) => (
                <AppSlot key={name} $active={active} $open={open}>
                    <Svg width="20" height="20" viewBox="0 0 20 20" $stroke="none">{icon}</Svg>
                </AppSlot>
            ))}
            <Clock>
                <Fit width={35}>6:57 PM</Fit>
                <Fit width={51}>2021-09-17</Fit>
            </Clock>
        </TaskRow>
    );
}

const TaskRow = styled.footer`
    display: flex;
    flex: none;
    height: 33px;
    background: linear-gradient(90deg, #dad9d4, #d5d9d2 40%, #dadbce 55%, #d4d9d1 80%, #d9dad5);
`;

const SystemButton = styled.div`
    display: flex;
    align-items: center;
    justify-content: center;
    width: 40px;
    height: 32px;

    &:nth-child(3) {
        width: 41.5px;
    }
`;

const AppSlot = styled.div`
    display: flex;
    align-items: center;
    justify-content: center;
    flex: none;
    width: 41.35px;
    height: 33px;
    padding: 0 0 1px 1px;
    background:
        ${({ $open, $active }) => ($open ? `linear-gradient(#1e9648, #1e9648) 50% 100% / ${$active ? 39 : 34}px 2px no-repeat,` : "")}
        ${({ $active }) => ($active ? "linear-gradient(#f4f5f4, #f4f5f4) 50% 0 / 39px 100% no-repeat" : "none")};
`;

const Clock = styled.div`
    display: flex;
    flex-direction: column;
    align-items: center;
    width: 54px;
    margin: 0 4px 0 auto;
    line-height: 16px;
    font-size: 10px;
    color: #222;
`;

/* ---------- App ---------- */

export default function App() {
    return (
        <Shell>
            <GlobalStyle />
            <TitleBar />
            <TabBar />
            <Ribbon />
            <Workspace>
                <VerticalRuler />
                <div>
                    <HorizontalRuler />
                    <Pages />
                </div>
                <ScrollBar />
            </Workspace>
            <StatusBar />
            <TaskBar />
            <MouseKey top={524} />
            <MouseKey top={595} />
            <Caret />
            <ClickRing />
            <IBeam width="6" height="11" viewBox="0 0 6 11" $stroke="#333">
                <path d="M.5.5h1.700l.8.7.8-.7h1.700M3 1v9M.5 10.500h1.700l.8-.7.8.7h1.700" />
            </IBeam>
        </Shell>
    );
}

const Shell = styled.div`
    position: relative;
    display: flex;
    flex-direction: column;
    width: 1280px;
    height: 720px;
    overflow: hidden;
    background: #f2f3ef;
`;

const Workspace = styled.main`
    display: flex;
    flex: 1;
    min-height: 0;
    overflow: hidden;
    background: #e5e5e5;
    border-bottom: 1px solid #d6d6d4;
`;
